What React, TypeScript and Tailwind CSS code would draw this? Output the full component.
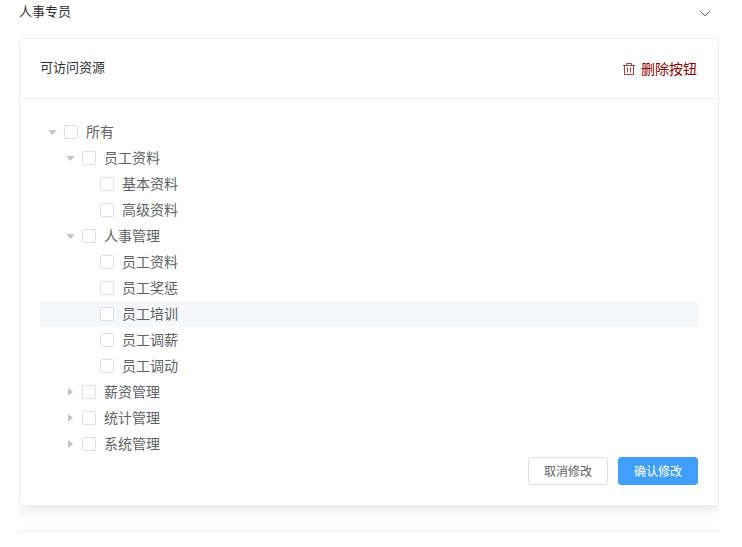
type TreeNode = {
  label: string;
  depth: number;
  state: 'open' | 'closed' | 'leaf';
  hovered?: boolean;
};

const nodes: TreeNode[] = [
  { label: '所有', depth: 0, state: 'open' },
  { label: '员工资料', depth: 1, state: 'open' },
  { label: '基本资料', depth: 2, state: 'leaf' },
  { label: '高级资料', depth: 2, state: 'leaf' },
  { label: '人事管理', depth: 1, state: 'open' },
  { label: '员工资料', depth: 2, state: 'leaf' },
  { label: '员工奖惩', depth: 2, state: 'leaf' },
  { label: '员工培训', depth: 2, state: 'leaf', hovered: true },
  { label: '员工调薪', depth: 2, state: 'leaf' },
  { label: '员工调动', depth: 2, state: 'leaf' },
  { label: '薪资管理', depth: 1, state: 'closed' },
  { label: '统计管理', depth: 1, state: 'closed' },
  { label: '系统管理', depth: 1, state: 'closed' },
];

const indents = ['pl-0', 'pl-[18px]', 'pl-[36px]'];

function Caret({ state }: { state: TreeNode['state'] }) {
  return (
    <svg className="mr-[5px] ml-[6px] h-3 w-[13px] shrink-0" viewBox="0 0 13 12" fill="#c0c4cc">
      {state === 'open' && <path d="M2.5 4h8L6.9 8.7h-.8z" />}
      {state === 'closed' && <path d="M4 1.8v8L8.6 6.2v-.8z" />}
    </svg>
  );
}

function Row({ node }: { node: TreeNode }) {
  return (
    <div className={`flex h-[26px] items-center ${indents[node.depth]} ${node.hovered ? 'bg-[#f5f7fa]' : ''}`}>
      <Caret state={node.state} />
      <span className="mr-2 size-[14px] shrink-0 rounded-[2px] border border-[#dcdfe6] bg-white" />
      <span className="pb-0.5 text-[14px] leading-6 text-[#606266]">{node.label}</span>
    </div>
  );
}

export default function App() {
  return (
    <div className="h-[547px] w-[742px] overflow-hidden bg-white pl-[19px] font-['Noto_Sans_CJK_SC',sans-serif] text-[#303133]">
      <div className="flex h-[38px] w-[700px] items-start justify-between pr-2">
        <span className="text-[13px] leading-[22px]">人事专员</span>
        <svg className="mt-[7px] h-[13px] w-3" viewBox="0 0 12 13" fill="none" stroke="#606266">
          <path d="M1.2 4.2L6 9l4.8-4.8" />
        </svg>
      </div>
      <div className="h-[494px] w-[700px] overflow-hidden border-b border-[#ebeef5]">
        <section className="h-[468px] rounded-[4px] border border-[#ebeef5] bg-white shadow-[0_4px_14px_0_rgba(0,0,0,0.1)]">
          <header className="flex h-[60px] items-center justify-between border-b border-[#ebeef5] pr-[21px] pl-5">
            <span className="pb-[3px] text-[13px] leading-5">可访问资源</span>
            <button className="flex items-center gap-[5px] text-[14px] leading-5 text-[#8b0000]">
              <svg className="h-[14px] w-[14px]" viewBox="0 0 14 14" fill="none" stroke="currentColor" strokeOpacity=".75">
                <path d="M1 3.5h12M4.5 3V1.5h5V3M2.5 3.5v9h9v-9M5.5 5.5v5M8.5 5.5v5" />
              </svg>
              <span className="pb-px">删除按钮</span>
            </button>
          </header>
          <div className="p-5">
            {nodes.map((node, i) => (
              <Row key={i} node={node} />
            ))}
            <div className="flex justify-end gap-[10px]">
              <button className="h-7 w-20 rounded-[3px] border border-[#dcdfe6] bg-white text-[12px] leading-3 text-[#606266]">
                取消修改
              </button>
              <button className="h-7 w-20 rounded-[3px] border border-[#409eff] bg-[#409eff] text-[12px] leading-3 text-white">
                确认修改
              </button>
            </div>
          </div>
        </section>
      </div>
    </div>
  );
}
